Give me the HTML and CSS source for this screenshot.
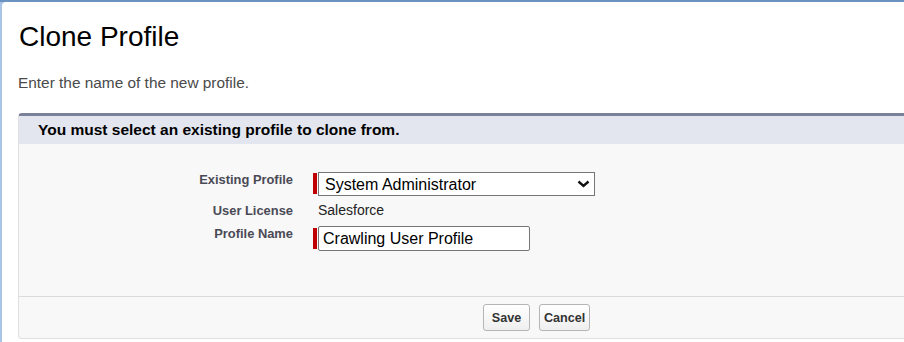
FILE: index.html
```html
<!DOCTYPE html>
<html lang="en">
<head>
    <meta charset="UTF-8">
    <meta name="viewport" content="width=device-width, initial-scale=1.0">
    <title>Clone Profile</title>
    <link rel="stylesheet" href="styles.css">
</head>
<body>

    <div class="page">
        <h1 class="page-title">Clone Profile</h1>
        <p class="page-intro">Enter the name of the new profile.</p>

        <div class="block">
            <div class="block-header">You must select an existing profile to clone from.</div>

            <div class="block-body">
                <div class="field-label">Existing Profile</div>
                <div class="field required">
                    <span class="req-bar"></span>
                    <div class="select-wrap">
                        <select class="field-select">
                            <option>System Administrator</option>
                            <option>Standard User</option>
                            <option>Read Only</option>
                        </select>
                        <svg class="chevron" width="13" height="8" viewBox="0 0 13 8">
                            <path d="M1.5 1.5 L6.5 6 L11.5 1.5" fill="none" stroke="#111" stroke-width="2.4"/>
                        </svg>
                    </div>
                </div>

                <div class="field-label label-text">User License</div>
                <div class="field field-text">Salesforce</div>

                <div class="field-label">Profile Name</div>
                <div class="field required">
                    <span class="req-bar"></span>
                    <input class="field-input" type="text" value="Crawling User Profile">
                </div>
            </div>

            <div class="block-footer">
                <button class="btn">Save</button>
                <button class="btn">Cancel</button>
            </div>
        </div>
    </div>

</body>
</html>
```

FILE: styles.css
```css
body {
    margin: 0;
    background-color: #a9c4e6; /* outer page blue */
    border-top: 2px solid #6a93c1;
    font-family: "Liberation Sans", Arial, sans-serif;
    overflow: hidden;
}

/* --- White page panel --- */
.page {
    margin-left: 2px;
    background-color: #ffffff;
    border-top-left-radius: 4px;
    padding: 19px 0 4px 16px;
    height: 340px;
    box-sizing: border-box;
}

.page-title {
    margin: 0 0 21px 1px;
    font-size: 28px;
    line-height: 32px;
    font-weight: normal;
    color: #000000;
}

.page-intro {
    margin: 0 0 21px 0;
    font-size: 15.4px;
    line-height: 18px;
    color: #4a4a4a;
}

/* --- Section block --- */
.block {
    border-top: 3px solid #7a8199;
    border-left: 1px solid #e0e0e0;
    border-bottom: 1px solid #e0e0e0;
    border-radius: 4px 0 0 4px;
    background-color: #f8f8f8;
}

.block-header {
    height: 28px;
    line-height: 28px;
    background-color: #e3e6ef;
    padding-left: 19px;
    font-size: 15.5px;
    font-weight: bold;
    color: #000000;
}

.block-body {
    display: grid;
    grid-template-columns: 274px 1fr;
    column-gap: 20px;
    row-gap: 4px;
    grid-auto-rows: 23px;
    padding: 28px 0 47px 0;
    border-bottom: 1px solid #dbdbdb;
}

.block-body > :nth-child(5),
.block-body > :nth-child(6) {
    height: 25px;
}

.field-label {
    text-align: right;
    font-size: 12.9px;
    line-height: 15px;
    font-weight: bold;
    color: #4a4a56;
}

.label-text {
    padding-top: 4px;
}

.field {
    display: flex;
    align-items: flex-start;
}

.field-text {
    padding-left: 5px;
    font-size: 14px;
    line-height: 23px;
    color: #222222;
}

.req-bar {
    width: 4px;
    height: 21px;
    margin: 1px 1px 0 0;
    background-color: #c00000;
}

.required:last-child .req-bar {
    margin-top: 2px;
}

.select-wrap {
    position: relative;
}

.field-select {
    -webkit-appearance: none;
    appearance: none;
    width: 277px;
    height: 24px;
    margin: 0;
    padding: 0 0 0 6px;
    border: 1px solid #767676;
    border-radius: 0;
    background-color: #ffffff;
    font-family: "Liberation Sans", Arial, sans-serif;
    font-size: 16px;
    color: #000000;
}

/* drop-down arrow sits over the select */
.chevron {
    position: absolute;
    right: 5px;
    top: 8px;
    pointer-events: none;
}

.field-input {
    width: 212px;
    height: 25px;
    margin: 0;
    padding: 0 0 0 4px;
    box-sizing: border-box;
    border: 1px solid #767676;
    border-radius: 2px;
    background-color: #ffffff;
    font-family: "Liberation Sans", Arial, sans-serif;
    font-size: 16px;
    color: #000000;
}

/* --- Buttons row --- */
.block-footer {
    display: flex;
    gap: 9px;
    padding: 7px 0 0 464px;
    height: 34px;
}

.btn {
    min-width: 47px;
    height: 27px;
    padding: 0 4px;
    border: 1px solid #b5b5b5;
    border-radius: 3px;
    background: linear-gradient(#ffffff, #efefef);
    font-family: "Liberation Sans", Arial, sans-serif;
    font-size: 12.6px;
    font-weight: bold;
    color: #333333;
    cursor: pointer;
}
```
